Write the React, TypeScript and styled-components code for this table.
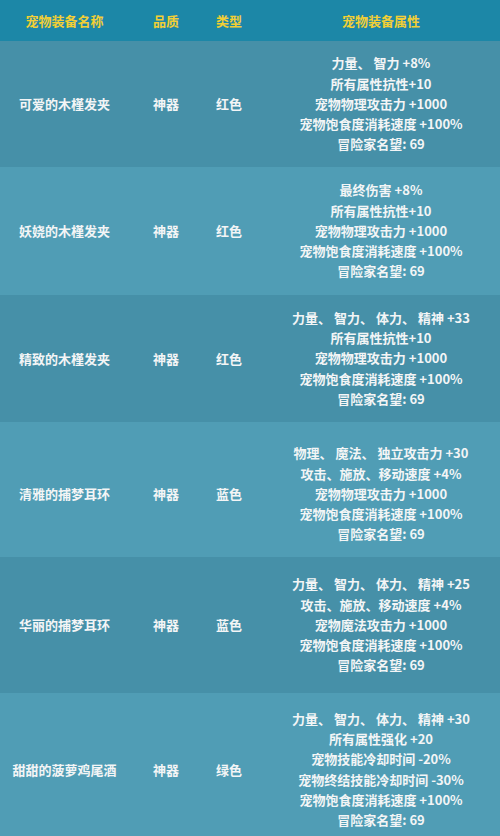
import React from 'react';
import styled, { createGlobalStyle } from 'styled-components';

const GlobalStyle = createGlobalStyle`
	html, body {
		margin: 0;
		padding: 0;
		background: #4690a8;
		overflow: hidden;
	}
	#root {
		width: 500px;
		height: 836px;
		overflow: hidden;
	}
`;

interface Equip {
	name: string;
	quality: string;
	kind: string;
	attrs: string[];
	height: number;
	shift?: number;
}

const rows: Equip[] = [
	{
		name: '可爱的木槿发夹',
		quality: '神器',
		kind: '红色',
		attrs: ['力量、 智力 +8%', '所有属性抗性+10', '宠物物理攻击力 +1000', '宠物饱食度消耗速度 +100%', '冒险家名望: 69'],
		height: 126,
	},
	{
		name: '妖娆的木槿发夹',
		quality: '神器',
		kind: '红色',
		attrs: ['最终伤害 +8%', '所有属性抗性+10', '宠物物理攻击力 +1000', '宠物饱食度消耗速度 +100%', '冒险家名望: 69'],
		height: 128,
	},
	{
		name: '精致的木槿发夹',
		quality: '神器',
		kind: '红色',
		attrs: ['力量、 智力、 体力、 精神 +33', '所有属性抗性+10', '宠物物理攻击力 +1000', '宠物饱食度消耗速度 +100%', '冒险家名望: 69'],
		height: 127,
	},
	{
		name: '清雅的捕梦耳环',
		quality: '神器',
		kind: '蓝色',
		attrs: ['物理、 魔法、 独立攻击力 +30', '攻击、施放、移动速度 +4%', '宠物物理攻击力 +1000', '宠物饱食度消耗速度 +100%', '冒险家名望: 69'],
		height: 135,
		shift: 9,
	},
	{
		name: '华丽的捕梦耳环',
		quality: '神器',
		kind: '蓝色',
		attrs: ['力量、 智力、 体力、 精神 +25', '攻击、施放、移动速度 +4%', '宠物魔法攻击力 +1000', '宠物饱食度消耗速度 +100%', '冒险家名望: 69'],
		height: 136,
	},
	{
		name: '甜甜的菠萝鸡尾酒',
		quality: '神器',
		kind: '绿色',
		attrs: ['力量、 智力、 体力、 精神 +30', '所有属性强化 +20', '宠物技能冷却时间 -20%', '宠物终结技能冷却时间 -30%', '宠物饱食度消耗速度 +100%', '冒险家名望: 69'],
		height: 153,
	},
];

export default function App() {
	return (
		<>
			<GlobalStyle />
			<Table>
				<HeaderRow>
					<HeadCell>宠物装备名称</HeadCell>
					<HeadCell>品质</HeadCell>
					<HeadCell>类型</HeadCell>
					<HeadCell $attr>宠物装备属性</HeadCell>
				</HeaderRow>
				{rows.map((row, idx) => (
					<Row key={row.name} $height={row.height} $light={idx % 2 === 1} $shift={row.shift ?? 0}>
						<Cell>{row.name}</Cell>
						<Cell>{row.quality}</Cell>
						<Cell>{row.kind}</Cell>
						<AttrCell>
							{row.attrs.map((a) => (
								<AttrLine key={a}>{a}</AttrLine>
							))}
						</AttrCell>
					</Row>
				))}
			</Table>
		</>
	);
}

const Table = styled.div`
	display: flex;
	flex-direction: column;
	width: 500px;
	font-family: 'Noto Sans CJK SC', 'Noto Sans', sans-serif;
	font-weight: 700;
	font-size: 13px;
`;

const HeaderRow = styled.div`
	display: grid;
	grid-template-columns: 129px 74px 52px 1fr;
	align-items: center;
	height: 41px;
	background: #1c87a7;
`;

const HeadCell = styled.div<{ $attr?: boolean }>`
	text-align: center;
	color: #f2cf35;
	padding-left: ${({ $attr }) => ($attr ? '7px' : '0')};
	line-height: 20px;
`;

interface RowProps {
	$height: number;
	$light: boolean;
	$shift: number;
}

const Row = styled.div<RowProps>`
	display: grid;
	grid-template-columns: 129px 74px 52px 1fr;
	align-items: center;
	flex: none;
	box-sizing: border-box;
	height: ${({ $height }) => $height}px;
	padding-top: ${({ $shift }) => $shift}px;
	background: ${({ $light }) => ($light ? '#509db5' : '#4690a8')};
	color: #f3f5f6;
`;

const Cell = styled.div`
	text-align: center;
	line-height: 20px;
	white-space: nowrap;
`;

const AttrCell = styled.div`
	display: flex;
	flex-direction: column;
	align-items: center;
	padding-left: 7px;
`;

const AttrLine = styled.div`
	line-height: 20.3px;
	white-space: nowrap;
`;
